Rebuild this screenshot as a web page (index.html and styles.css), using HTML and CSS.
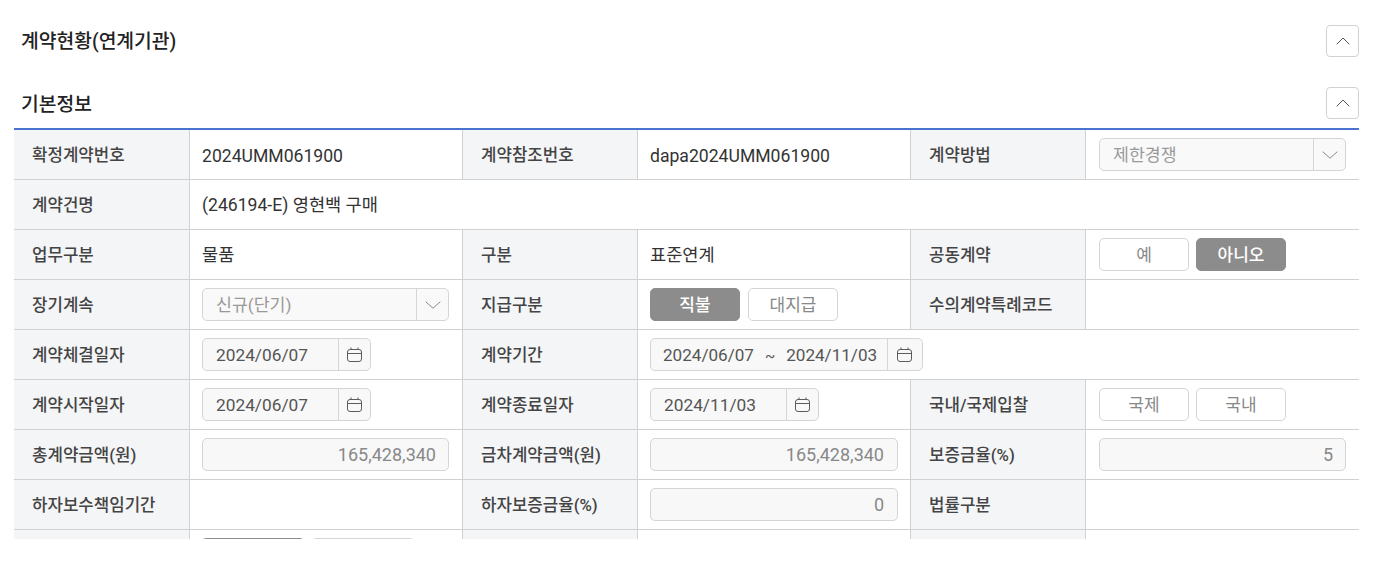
FILE: index.html
```html
<!DOCTYPE html>
<html lang="ko">
<head>
<meta charset="utf-8">
<title>계약현황</title>
<link rel="stylesheet" href="styles.css">
</head>
<body>
<main class="page">
  <header class="sec-head sec-head-first">
    <h2 class="sec-title">계약현황(연계기관)</h2>
    <button class="fold" type="button"><svg width="14" height="8" viewBox="0 0 14 8"><path d="M.7 7.300 7 1l6.300 6.300" class="ico"/></svg></button>
  </header>
  <header class="sec-head sec-head-second">
    <h2 class="sec-title">기본정보</h2>
    <button class="fold" type="button"><svg width="14" height="8" viewBox="0 0 14 8"><path d="M.7 7.300 7 1l6.300 6.300" class="ico"/></svg></button>
  </header>
  <div class="clip">
    <table class="form">
      <colgroup><col class="c1"><col class="c2"><col class="c3"><col class="c4"><col class="c5"><col></colgroup>
      <tbody>
        <tr>
          <th>확정계약번호</th><td class="lat">2024UMM061900</td>
          <th>계약참조번호</th><td class="lat">dapa2024UMM061900</td>
          <th>계약방법</th>
          <td><div class="field select"><span class="val">제한경쟁</span><span class="addon"><svg width="16" height="8" viewBox="0 0 16 8"><path d="M.7.7 8 7.200 15.300.7" class="ico soft"/></svg></span></div></td>
        </tr>
        <tr><th>계약건명</th><td colspan="5" class="open txt">(246194-E) 영현백 구매</td></tr>
        <tr>
          <th>업무구분</th><td class="txt">물품</td>
          <th>구분</th><td class="txt">표준연계</td>
          <th>공동계약</th>
          <td><div class="toggles"><span class="tg">예</span><span class="tg on">아니오</span></div></td>
        </tr>
        <tr>
          <th>장기계속</th>
          <td><div class="field select"><span class="val">신규(단기)</span><span class="addon"><svg width="16" height="8" viewBox="0 0 16 8"><path d="M.7.7 8 7.200 15.300.7" class="ico soft"/></svg></span></div></td>
          <th>지급구분</th>
          <td><div class="toggles gap8"><span class="tg on">직불</span><span class="tg">대지급</span></div></td>
          <th>수의계약특례코드</th><td></td>
        </tr>
        <tr>
          <th>계약체결일자</th>
          <td><div class="field date"><span class="val">2024/06/07</span><span class="addon"><svg width="15" height="15" viewBox="0 0 15 15"><path d="M4 .5V3M11 .5V3M.5 6.500h14M3 2.500h9A2.500 2.500 0 0 1 14.500 5v7a2.500 2.500 0 0 1-2.500 2.500H3A2.500 2.500 0 0 1 .5 12V5A2.500 2.500 0 0 1 3 2.500Z" class="ico dark"/></svg></span></div></td>
          <th>계약기간</th>
          <td colspan="3" class="open"><div class="field range"><span class="val">2024/06/07<i class="tilde">~</i>2024/11/03</span><span class="addon"><svg width="15" height="15" viewBox="0 0 15 15"><path d="M4 .5V3M11 .5V3M.5 6.500h14M3 2.500h9A2.500 2.500 0 0 1 14.500 5v7a2.500 2.500 0 0 1-2.500 2.500H3A2.500 2.500 0 0 1 .5 12V5A2.500 2.500 0 0 1 3 2.500Z" class="ico dark"/></svg></span></div></td>
        </tr>
        <tr>
          <th>계약시작일자</th>
          <td><div class="field date"><span class="val">2024/06/07</span><span class="addon"><svg width="15" height="15" viewBox="0 0 15 15"><path d="M4 .5V3M11 .5V3M.5 6.500h14M3 2.500h9A2.500 2.500 0 0 1 14.500 5v7a2.500 2.500 0 0 1-2.500 2.500H3A2.500 2.500 0 0 1 .5 12V5A2.500 2.500 0 0 1 3 2.500Z" class="ico dark"/></svg></span></div></td>
          <th>계약종료일자</th>
          <td><div class="field date"><span class="val">2024/11/03</span><span class="addon"><svg width="15" height="15" viewBox="0 0 15 15"><path d="M4 .5V3M11 .5V3M.5 6.500h14M3 2.500h9A2.500 2.500 0 0 1 14.500 5v7a2.500 2.500 0 0 1-2.500 2.500H3A2.500 2.500 0 0 1 .5 12V5A2.500 2.500 0 0 1 3 2.500Z" class="ico dark"/></svg></span></div></td>
          <th>국내/국제입찰</th>
          <td><div class="toggles"><span class="tg">국제</span><span class="tg">국내</span></div></td>
        </tr>
        <tr>
          <th>총계약금액(원)</th><td><div class="field num">165,428,340</div></td>
          <th>금차계약금액(원)</th><td class="tight"><div class="field num">165,428,340</div></td>
          <th>보증금율(%)</th><td><div class="field num">5</div></td>
        </tr>
        <tr>
          <th>하자보수책임기간</th><td></td>
          <th>하자보증금율(%)</th><td class="tight"><div class="field num">0</div></td>
          <th>법률구분</th><td></td>
        </tr>
        <tr>
          <th></th>
          <td><div class="toggles wide"><span class="tg on"></span><span class="tg"></span></div></td>
          <th></th><td></td><th></th><td></td>
        </tr>
      </tbody>
    </table>
  </div>
</main>
</body>
</html>
```

FILE: styles.css
```css
* { box-sizing: border-box; }
html, body { margin: 0; padding: 0; background: #fff; }
body {
  font-family: Roboto, "Noto Sans CJK KR", "Noto Sans", sans-serif;
  font-size: 17.6px;
  color: #333;
}
.page { padding: 0 20px 0 14px; }
.sec-head { display: flex; align-items: center; justify-content: space-between; height: 32px; padding-left: 7px; }
.sec-head-first { margin-top: 25px; }
.sec-head-second { margin-top: 30px; }
.sec-title { margin: 0; padding-top: 3px; font-size: 19.3px; font-weight: 500; color: #222; line-height: 32px; }
.sec-head-first .sec-title { padding-top: 1px; }
.fold {
  width: 33px; height: 32px; padding: 0; display: flex; align-items: center; justify-content: center;
  background: #fff; border: 1px solid #d2d2d2; border-radius: 4px;
}
.ico { fill: none; stroke: #555; stroke-width: 1; }
.ico.soft { stroke: #888; }
.ico.dark { stroke: #5c5c5c; }
.clip { height: 411px; margin-top: 9px; overflow: hidden; border-top: 2px solid #4a72d0; }
.form { width: 100%; table-layout: fixed; border-collapse: separate; border-spacing: 0; }
.c1 { width: 176px; }
.c2 { width: 273px; }
.c3 { width: 175px; }
.c4 { width: 273px; }
.c5 { width: 175px; }
.form tr { height: 50px; }
.form th, .form td { padding: 0; border-bottom: 1px solid #d0d1d3; height: 50px; vertical-align: middle; }
.form th {
  padding: 0 0 2px 18px; text-align: left; font-size: 16.8px; font-weight: 500; color: #444; background: #f4f5f7;
  border-right: 1px solid #d0d1d3;
}
.form td { padding: 0 13px 0 12px; color: #333; border-right: 1px solid #d0d1d3; white-space: nowrap; }
.form td.tight { padding-right: 12px; }
.form td:last-child, .form td.open { border-right: 0; }
.form td:last-child { padding-left: 13px; padding-right: 13px; }
.form td.open { padding-left: 12px; }
.form td.lat { padding-top: 2px; }
.form td.txt { padding-bottom: 2px; }
.field {
  display: flex; align-items: center; height: 33px; border: 1px solid #d5d5d5; border-radius: 5px;
  background: #f8f8f8; color: #555; font-size: 17.3px;
}
.val { flex: 1; padding-left: 13px; white-space: nowrap; }
.addon { align-self: stretch; display: flex; align-items: center; justify-content: center; border-left: 1px solid #d5d5d5; width: 32px; }
.select { background: #f9f9f9; color: #999; font-size: 17.3px; }
.select .val { padding-bottom: 2px; }
.date { width: 169px; }
.range { width: 273px; font-size: 17.1px; }
.range .val { padding-left: 12px; }
.range .addon { width: 35px; padding-right: 2px; }
.tilde { font-style: normal; margin: 0 11px; font-size: 15px; }
.num { justify-content: flex-end; padding-right: 12px; color: #888; font-size: 18px; }
.tight .num { padding-right: 13px; }
.toggles { display: flex; gap: 7px; }
.toggles.gap8 { gap: 8px; }
.tg {
  width: 90px; height: 33px; padding-bottom: 2px; display: flex; align-items: center; justify-content: center;
  border: 1px solid #d5d5d5; border-radius: 5px; background: #fff; color: #888; font-size: 17px;
}
.tg.on { background: #8c8c8c; border-color: #8c8c8c; color: #fff; font-weight: 500; }
.wide { gap: 8px; margin-top: -1px; }
.wide .tg { width: 102px; border-radius: 4px; }
```
